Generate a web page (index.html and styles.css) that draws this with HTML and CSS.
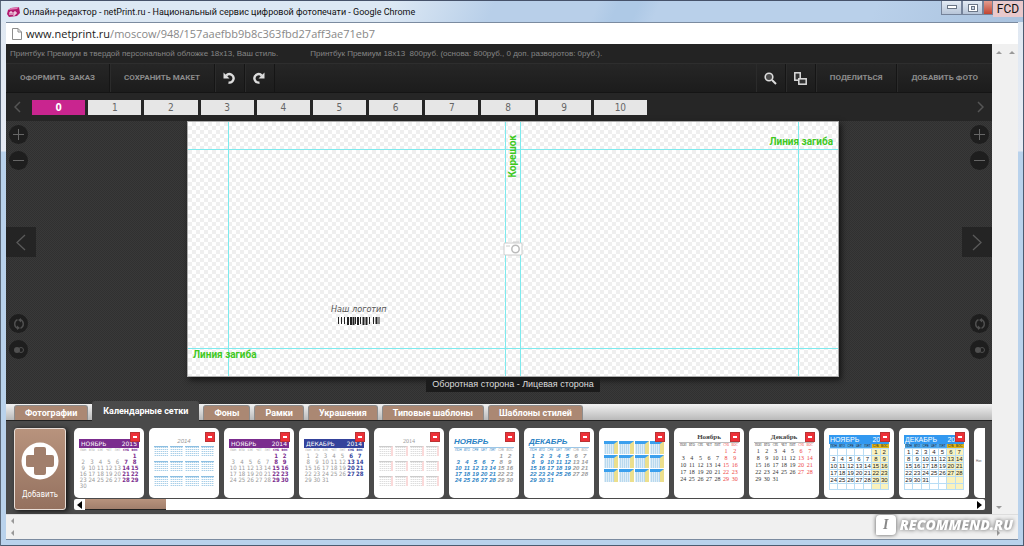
FILE: index.html
```
<!DOCTYPE html>
<html lang="ru">
<head>
<meta charset="utf-8">
<title>Онлайн-редактор - netPrint.ru</title>
<link rel="stylesheet" href="styles.css">
</head>
<body>
<div class="window">
  <header class="titlebar">
    <svg class="logo" viewBox="0 0 13 10" width="13" height="10" aria-hidden="true"><path d="M1 3 L4 1 L12 0 L13 6 L10 9 L2 10 L0 7Z" fill="#b3196f"/><path d="M1 3 L4 1 L12 0 L10 2Z" fill="#e07db5"/><path d="M3 8V5h2v3M7 9V5h2v2H7" stroke="#fff" fill="none"/></svg>
    <span class="title">Онлайн-редактор - netPrint.ru - Национальный сервис цифровой фотопечати - Google Chrome</span>
    <div class="winbtns">
      <button class="winbtn" aria-label="Свернуть"><svg width="10" height="5"><rect x=".5" y=".5" width="9" height="3" fill="#fff" stroke="#6b7686"/></svg></button>
      <button class="winbtn" aria-label="Развернуть"><svg width="10" height="8"><rect x=".5" y=".5" width="9" height="7" fill="#fff" stroke="#6b7686"/><rect x="3.5" y="2.5" width="3" height="3" fill="#ccd6e4" stroke="#6b7686"/></svg></button>
      <button class="winbtn close" aria-label="Закрыть"></button>
      <span class="fcd">FCD</span>
    </div>
  </header>
  <div class="frame">
    <div class="address">
      <svg width="10" height="12" viewBox="0 0 10 12" aria-hidden="true"><path d="M.5 .5H6L9.5 4V11.5H.5ZM6 .5V4H9.5" fill="#fff" stroke="#8d8d8d"/></svg>
      <span class="url"><b>www.netprint.ru</b>/moscow/948/157aaefbb9b8c363fbd27aff3ae71eb7</span>
    </div>
    <div class="viewport">
      <main class="app">
        <div class="info"><span>Принтбук Премиум в твердой персональной обложке 18х13, Ваш стиль.</span><span>Принтбук Премиум 18х13&nbsp; 800руб. (основа: 800руб., 0 доп. разворотов: 0руб.).</span></div>
        <nav class="toolbar">
          <button class="tool">ОФОРМИТЬ&nbsp; ЗАКАЗ</button>
          <button class="tool">СОХРАНИТЬ МАКЕТ</button>
          <button class="tool icon" aria-label="Отменить"><svg width="12" height="12" viewBox="0 0 12 12"><path d="M5.500 10.500A4.200 4.200 0 1 0 3.200 3.600" fill="none" stroke="#ddd" stroke-width="2.400"/><path d="M.5 .5V6.500H6.500Z" fill="#ddd"/></svg></button>
          <button class="tool icon" aria-label="Вернуть"><svg width="12" height="12" viewBox="0 0 12 12"><path d="M6.500 10.500A4.200 4.200 0 1 1 8.800 3.600" fill="none" stroke="#ddd" stroke-width="2.400"/><path d="M11.500 .5V6.500H5.500Z" fill="#ddd"/></svg></button>
          <span class="spacer"></span>
          <button class="tool icon" aria-label="Просмотр"><svg width="13" height="13" viewBox="0 0 13 13"><circle cx="5" cy="5" r="3.8" fill="#4a4a4a" stroke="#ddd" stroke-width="1.6"/><path d="M8 8L12 12" stroke="#ddd" stroke-width="2"/></svg></button>
          <button class="tool icon" aria-label="Страницы"><svg width="13" height="13" viewBox="0 0 13 13"><rect x=".8" y=".8" width="5.4" height="7.4" fill="#333" stroke="#ddd" stroke-width="1.5"/><rect x="4.8" y="6.8" width="7.4" height="5.4" fill="#333" stroke="#ddd" stroke-width="1.5"/></svg></button>
          <button class="tool">ПОДЕЛИТЬСЯ</button>
          <button class="tool last">ДОБАВИТЬ ФОТО</button>
        </nav>
        <nav class="pager">
          <button class="pagenav" aria-label="Назад"><svg width="7" height="12"><path d="M6 1L1 6L6 11" fill="none" stroke="#555" stroke-width="1.5"/></svg></button>
          <div class="pages">
            <button class="page current">0</button><button class="page">1</button><button class="page">2</button><button class="page">3</button><button class="page">4</button><button class="page">5</button><button class="page">6</button><button class="page">7</button><button class="page">8</button><button class="page">9</button><button class="page">10</button>
          </div>
          <button class="pagenav" aria-label="Вперёд"><svg width="7" height="12"><path d="M1 1L6 6L1 11" fill="none" stroke="#555" stroke-width="1.5"/></svg></button>
        </nav>
        <section class="stage">
          <div class="side">
            <div class="rounds">
              <button class="round" aria-label="Увеличить"><svg width="11" height="11"><path d="M0 5.5H11M5.5 0V11" stroke="#666"/></svg></button>
              <button class="round" aria-label="Уменьшить"><svg width="11" height="11"><path d="M0 5.5H11" stroke="#666"/></svg></button>
            </div>
            <button class="turn" aria-label="Предыдущий разворот"><svg width="10" height="17"><path d="M9 1L1 8.5L9 16" fill="none" stroke="#5a5a5a" stroke-width="1.3"/></svg></button>
            <div class="rounds">
              <button class="round" aria-label="Повернуть"><svg width="12" height="12"><path d="M4.500 1.700A4.700 4.700 0 0 0 4.500 10.300M7.500 1.700A4.700 4.700 0 0 1 7.500 10.300" fill="none" stroke="#505050" stroke-width="1.400"/><path d="M4 7.500L7 10L4 12ZM8 4.500L5 2L8 0Z" fill="#505050"/></svg></button>
              <button class="round" aria-label="Прозрачность"><svg width="12" height="8"><circle cx="4" cy="4" r="3" fill="#505050"/><circle cx="8" cy="4" r="2.5" fill="none" stroke="#505050"/></svg></button>
            </div>
          </div>
          <div class="middle">
            <div class="artboard">
              <i class="vline v1"></i><i class="vline v2"></i><i class="vline v3"></i><i class="vline v4"></i>
              <i class="hline h1"></i><i class="hline h2"></i>
              <span class="fold topright">Линия загиба</span>
              <span class="fold bottomleft">Линия загиба</span>
              <span class="fold spine">Корешок</span>
              <svg class="camera" width="20" height="15" viewBox="0 0 20 15"><rect x="1" y="2" width="18" height="12" rx="1" fill="#fff" stroke="#ccc"/><path d="M3 5h4M10 1h6" stroke="#ccc"/><circle cx="12.500" cy="8" r="3.700" fill="#fff" stroke="#bbb" stroke-width="1.500"/></svg>
              <div class="mark"><span>Наш логотип</span>
                <svg width="42" height="9" viewBox="0 0 42 9"><path d="M.5 0v7M3.500 0v7M6.500 0v7M17.500 0v7M22.500 0v7M31.500 0v7M35.500 0v7M41 0v7" stroke="#222"/><path d="M10 0v8M13 0v8M15.500 0v8M20 0v8M25.500 0v8M28.500 0v8M38.500 0v7" stroke="#222" stroke-width="2"/></svg>
              </div>
            </div>
            <div class="caption">Оборотная сторона - Лицевая сторона</div>
          </div>
          <div class="side right">
            <div class="rounds">
              <button class="round" aria-label="Увеличить"><svg width="11" height="11"><path d="M0 5.5H11M5.5 0V11" stroke="#666"/></svg></button>
              <button class="round" aria-label="Уменьшить"><svg width="11" height="11"><path d="M0 5.5H11" stroke="#666"/></svg></button>
            </div>
            <button class="turn" aria-label="Следующий разворот"><svg width="10" height="17"><path d="M1 1L9 8.5L1 16" fill="none" stroke="#5a5a5a" stroke-width="1.3"/></svg></button>
            <div class="rounds">
              <button class="round" aria-label="Повернуть"><svg width="12" height="12"><path d="M4.500 1.700A4.700 4.700 0 0 0 4.500 10.300M7.500 1.700A4.700 4.700 0 0 1 7.500 10.300" fill="none" stroke="#505050" stroke-width="1.400"/><path d="M4 7.500L7 10L4 12ZM8 4.500L5 2L8 0Z" fill="#505050"/></svg></button>
              <button class="round" aria-label="Прозрачность"><svg width="12" height="8"><circle cx="4" cy="4" r="3" fill="#505050"/><circle cx="8" cy="4" r="2.5" fill="none" stroke="#505050"/></svg></button>
            </div>
          </div>
        </section>
        <nav class="tabs">
          <button class="tab">Фотографии</button><button class="tab active">Календарные сетки</button><button class="tab">Фоны</button><button class="tab">Рамки</button><button class="tab">Украшения</button><button class="tab">Типовые шаблоны</button><button class="tab">Шаблоны стилей</button>
        </nav>
        <section class="strip">
          <button class="add"><svg width="38" height="38" viewBox="0 0 38 38"><circle cx="19" cy="19" r="18.500" fill="#fff"/><path d="M15 5h8q2 0 2 2v6h6q2 0 2 2v8q0 2-2 2h-6v6q0 2-2 2h-8q-2 0-2-2v-6H7q-2 0-2-2v-8q0-2 2-2h6V7q0-2 2-2Z" fill="#a17f6c"/></svg><span>Добавить</span></button>
          <div class="gallery">
            <div class="cards" id="cards"></div>
            <div class="scroll"><svg width="5" height="8"><path d="M5 0V8L0 4Z"/></svg><span class="thumb"></span><svg width="5" height="8"><path d="M0 0V8L5 4Z"/></svg></div>
          </div>
        </section>
      </main>
      <div class="vbars"><div class="vbar"><i class="up"></i><i class="down"></i></div><div class="vbar"><i class="up"></i></div></div>
    </div>
    <div class="hbars"><div class="hbar"><i class="lt"></i></div><div class="hbar"><i class="lt"></i><i class="rt"></i></div></div>
  </div>
  <div class="watermark"><span class="bubble">I</span><span class="word">RECOMMEND.RU</span></div>
</div>
<script src="app.js"></script>
</body>
</html>
```
FILE: styles.css
```
* { box-sizing: border-box; }
body { margin: 0; font-family: "Liberation Sans", Arial, sans-serif; }
button { border: 0; padding: 0; margin: 0; background: none; color: inherit; font: inherit; display: flex; align-items: center; justify-content: center; }
svg { display: block; flex: none; }

.window { position: relative; height: 100vh; display: flex; flex-direction: column; padding: 0 6px 6px; border-top: 1px solid #46526a; background: linear-gradient(#dfe8f2 0, #e6ebf4 150px, #b9d2ec 151px, #b9d2ec); box-shadow: inset 1px 0 #5d6b7d, inset -1px -1px #4b5b70; overflow: hidden; }
.titlebar { flex: none; height: 21px; display: flex; align-items: center; margin: 0 -5px; padding-left: 6px; background: linear-gradient(115deg, #dce8f4 0 38%, #b8cfe9 48% 58%, #aec9e6 60% 62%, #b9d0ea 64% 85%, #a9c2de); }
.title { margin-left: 3px; font: 9px/16px Roboto, sans-serif; color: #111; white-space: nowrap; }
.winbtns { display: flex; align-self: flex-start; margin-left: auto; }
.winbtn { width: 21px; height: 14px; border: 1px solid #75839a; border-top: 0; background: linear-gradient(#e4ebf4, #b7c5d8); }
.winbtn.close { width: 10px; background: linear-gradient(#e39d8f, #c14430); }
.fcd { width: 30px; height: 16px; background: #e9c9cc; font: 12px/16px Roboto, sans-serif; color: #111; text-align: center; }
.frame { flex: 1; min-height: 0; display: flex; flex-direction: column; border: 1px solid #7b8ba0; border-width: 1px 0; background: #f0f0f0; }
.address { flex: none; height: 21px; display: flex; align-items: center; gap: 4px; padding-left: 6px; background: #fff; }
.url { font: 11px/18px "Open Sans", sans-serif; color: #888; }
.url b { font-weight: 400; color: #222; }
.viewport { flex: 1; min-height: 0; display: flex; }
.app { flex: 1; min-width: 0; display: flex; flex-direction: column; background: #262626; }
.info { flex: none; height: 19px; display: flex; align-items: center; gap: 32px; padding-left: 4px; background: #232323; font-size: 8px; line-height: 12px; color: #858585; white-space: nowrap; }

.toolbar { flex: none; height: 30px; display: flex; border-top: 1px solid #2e2e2e; border-bottom: 1px solid #151515; background: linear-gradient(#262626, #1c1c1c); }
.tool { padding: 0 14px; border-right: 1px solid #151515; box-shadow: inset 1px 0 #2b2b2b; font: 700 8px/12px Roboto, sans-serif; color: #8b8b8b; white-space: nowrap; }
.tool.icon { width: 30px; padding: 0; }
.tool.last { border-right: 0; }
.spacer { flex: 1; }
.pager { flex: none; height: 28px; display: flex; align-items: center; justify-content: space-between; padding: 0 8px; }
.pages { flex: none; width: 63.4%; margin: 0 auto 0 11px; display: grid; grid-template-columns: repeat(11, 1fr); gap: 3px; }
.page { height: 15px; background: #e6e6e6; color: #666; font: 10px/15px "DejaVu Sans Condensed", sans-serif; }
.page.current { background: #c9258f; color: #fff; font-weight: 700; }

.stage { flex: 1; min-height: 0; display: grid; grid-template-columns: 181fr 652fr 153fr; background: repeating-conic-gradient(#303030 0 25%, #393939 0 50%) 0 0 / 2px 2px; }
.side { display: flex; flex-direction: column; align-items: flex-start; justify-content: space-between; padding: 4px 0 45px; }
.side.right { align-items: flex-end; }
.rounds { display: flex; flex-direction: column; gap: 7px; padding: 0 3px; }
.round { width: 19px; height: 19px; border-radius: 50%; background: #1e1e1e; }
.turn { width: 30px; height: 30px; background: #242424; }
.middle { display: flex; flex-direction: column; align-items: center; }
.artboard { position: relative; width: 100%; height: 256px; border: 1px solid #aaa; background: repeating-conic-gradient(#efefef 0 25%, #fff 0 50%) 0 0 / 8px 8px; box-shadow: 2px 3px 6px #111; }
.vline { position: absolute; top: 0; bottom: 0; width: 1px; background: #7deaee; }
.hline { position: absolute; left: 0; right: 0; height: 1px; background: #7deaee; }
.v1 { left: 6.2%; } .v2 { left: 48.8%; } .v3 { left: 51.1%; } .v4 { left: 93.8%; }
.h1 { top: 10.6%; } .h2 { top: 89%; }
.fold { position: absolute; font: 700 10px/14px Roboto, sans-serif; color: #3fc91f; white-space: nowrap; }
.topright { top: 13px; right: 5px; }
.bottomleft { bottom: 14px; left: 5px; }
.spine { top: 13px; left: 50%; writing-mode: vertical-rl; transform: translateX(-50%) rotate(180deg); }
.camera { position: absolute; top: 119px; left: calc(50% - 10px); }
.mark { position: absolute; top: 180px; left: 22%; display: flex; flex-direction: column; align-items: center; gap: 1px; font: italic 9px/14px "DejaVu Sans Condensed", sans-serif; color: #555; }
.caption { padding: 0 6px; background: #1b1b1b; color: #ddd; font-size: 9px; line-height: 15px; z-index: 1; }

.tabs { flex: none; height: 17px; display: flex; align-items: flex-end; gap: 4px; padding-left: 8px; background: linear-gradient(#f2f2f2, #b9b9b9); border-bottom: 1px solid #222; }
.tab { height: 15px; padding: 0 10px; border: 1px solid #8d8d8d; border-bottom: 0; border-radius: 3px 3px 0 0; background: #ab8873; color: #fff; font: 700 9px/13px Roboto, sans-serif; white-space: nowrap; }
.tab.active { height: 20px; margin-bottom: -1px; border-color: #4a4a4a; background: #4a4a4a; }

.strip { flex: none; height: 93px; display: flex; gap: 8px; padding: 7px 7px 4px 8px; background: #4a4a4a; }
.add { flex: none; width: 52px; flex-direction: column; gap: 9px; padding-top: 4px; border: 1px solid #e8ddd6; border-radius: 3px; background: linear-gradient(#b8937d, #94715f); box-shadow: 2px 1px 5px #111; color: #fff; font: 8px/12px "DejaVu Sans Condensed", sans-serif; }
.gallery { flex: 1; min-width: 0; display: flex; flex-direction: column; gap: 1px; }
.cards { flex: none; display: flex; gap: 5px; overflow: hidden; }
.card { position: relative; flex: none; width: 70px; height: 70px; padding: 11px 5px 0; border-radius: 5px; background: #fff; overflow: hidden; }
.remove { position: absolute; top: 4px; right: 4px; width: 10px; height: 10px; border: 1px solid #b33; background: #ee3038; }
.remove::before { content: ""; width: 4px; height: 2px; background: #fff; }
.scroll { flex: none; height: 11px; display: flex; align-items: center; gap: 3px; padding: 0 3px; background: #fff; border-radius: 2px; }
.scroll .thumb { width: 9%; height: 11px; margin-right: auto; background: linear-gradient(#b8937d, #a17f6c); border-bottom: 1px solid #222; }

.head { display: flex; justify-content: space-between; padding: 0 2px; font: 6px/9px "DejaVu Sans", sans-serif; }
.month { width: 100%; border-collapse: collapse; table-layout: fixed; font: 6px/6px "DejaVu Sans Condensed", sans-serif; color: #999; }
.month th, .month td { height: 6px; padding: 0; text-align: center; font-weight: 400; }
.month th { font-size: 3px; line-height: 5px; height: 5px; }
.bar .head { color: #fff; background: #7b2c8e; }
.bar .we { color: #7b2c8e; font-weight: 700; }
.bar.navy .head { background: #34429b; }
.bar.navy .we { color: #34429b; }
.slant { padding-top: 9px; }
.slant .head { padding: 0; font: italic 700 8px/10px "Liberation Sans", sans-serif; color: #2b82c4; border-bottom: 1px solid #9cc6e6; }
.slant .month { font: italic 700 6px/6px "Liberation Sans", sans-serif; color: #2b82c4; }
.slant .month td { font-weight: 700; }
.slant .we { color: #999; }
.serif { padding-top: 5px; }
.serif .head { justify-content: center; font: 700 7px/9px "Liberation Serif", serif; color: #444; border-bottom: 1px solid #bbb; }
.serif .month { font: 6px/7px "Liberation Serif", serif; color: #333; }
.serif .month td { height: 7px; }
.serif .we { color: #e44; }
.grid { padding-top: 7px; }
.grid .head { padding: 0 1px; font: 7px/9px "Liberation Sans", sans-serif; color: #fff; background: #3198f0; }
.grid .month { font: 6px/6px "Liberation Sans", sans-serif; color: #222; }
.grid .month td { border: 1px solid #b8ddf5; height: 6px; line-height: 6px; }
.grid .month th { background: #4ba7ef; font-size: 3px; line-height: 4px; height: 4px; }
.grid .month .we { background: #faf2bd; }
.grid .month th.we { background: #dfb519; }

.year { display: grid; grid-template-columns: repeat(4, 1fr); gap: 5px 2px; padding-top: 1px; }
.yearhead { margin-top: -2px; font: italic 6px/8px "Liberation Sans", sans-serif; text-align: center; color: #999; }
.mini { height: 10px; border-top: 1px solid #8dbfe2; background: repeating-linear-gradient(90deg, #fff9 0 1px, transparent 1px 2px), repeating-linear-gradient(#a9cfe8 0 1px, #fff 1px 2px); }
.pale .yearhead { font-family: "Liberation Serif", serif; font-style: normal; }
.pale .mini { border-top: 1px solid #ccc; background: repeating-linear-gradient(90deg, #fff9 0 1px, transparent 1px 2px), repeating-linear-gradient(#ddd 0 1px, #fff 1px 2px); border-right: 2px solid #fbdada; }
.vivid .year { gap: 1px; padding-top: 2px; }
.vivid .mini { height: 13px; border-top: 3px solid #3aa0ee; border-right: 4px solid #ecdf8c; background: repeating-linear-gradient(90deg, #fff8 0 1px, transparent 1px 2px), #b9d9ee; }
.tiny { padding: 31px 2px; font-size: 3px; line-height: 4px; color: #555; }

.vbars { flex: none; width: 26px; display: flex; background: #f0f0f0; }
.vbar { flex: 1; display: flex; flex-direction: column; align-items: center; justify-content: space-between; padding: 7px 0 5px; }
.up, .down { border: 3px solid transparent; border-top-width: 0; border-bottom-color: #999; }
.down { transform: rotate(180deg); }
.hbars { flex: none; height: 25px; background: #f0f0f0; border-top: 1px solid #ddd; }
.hbar { display: flex; align-items: center; justify-content: space-between; height: 12px; padding: 0 18px 0 5px; }
.lt, .rt { border: 3px solid transparent; border-left-width: 0; border-right-color: #999; }
.rt { transform: rotate(180deg); }
.watermark { position: absolute; right: 11px; bottom: 11px; display: flex; align-items: center; gap: 4px; color: #fff; filter: drop-shadow(0 0 2px #555); }
.bubble { width: 20px; height: 20px; border-radius: 4px 4px 4px 1px; background: #fff; color: #888; font: italic 700 14px/20px "Liberation Serif", serif; text-align: center; }
.word { font: italic 800 14px/20px "Open Sans", sans-serif; }
```
FILE: app.js
```
// Calendar templates shown in the gallery strip.
const templates = [
  { kind: "bar", name: "НОЯБРЬ", year: 2015, offset: 6, days: 30 },
  { kind: "soft", year: 2014 },
  { kind: "bar", name: "НОЯБРЬ", year: 2014, offset: 5, days: 30 },
  { kind: "bar navy", name: "ДЕКАБРЬ", year: 2014, offset: 0, days: 31 },
  { kind: "pale", year: 2014 },
  { kind: "slant", name: "НОЯБРЬ", offset: 5, days: 30 },
  { kind: "slant", name: "ДЕКАБРЬ", offset: 0, days: 31 },
  { kind: "vivid" },
  { kind: "serif", name: "Ноябрь", offset: 5, days: 30 },
  { kind: "serif", name: "Декабрь", offset: 0, days: 31 },
  { kind: "grid", name: "НОЯБРЬ", year: 2014, offset: 5, days: 30 },
  { kind: "grid", name: "ДЕКАБРЬ", year: 2014, offset: 0, days: 31 },
];
const weekdays = ["ПОН", "ВТО", "СРЕ", "ЧЕТ", "ПЯТ", "СУБ", "ВОС"];
const cls = (i) => (i > 4 ? ' class="we"' : "");

function monthTable(t) {
  let rows = "";
  // Ruled calendars always show six weeks; slots outside the month stay empty.
  const weeks = t.kind === "grid" ? 6 : Math.ceil((t.offset + t.days) / 7);
  for (let w = 0; w < weeks; w++) {
    rows += "<tr>";
    for (let i = 0; i < 7; i++) {
      const d = w * 7 + i - t.offset + 1;
      rows += `<td${cls(i)}>${d > 0 && d <= t.days ? d : ""}</td>`;
    }
    rows += "</tr>";
  }
  return `<div class="head"><span>${t.name}</span><span>${t.year || ""}</span></div>` +
    `<table class="month"><thead><tr>${weekdays.map((n, i) => `<th${cls(i)}>${n}</th>`).join("")}</tr></thead><tbody>${rows}</tbody></table>`;
}

function yearGrid(t) {
  return (t.year ? `<div class="yearhead">${t.year}</div>` : "") +
    `<div class="year">${'<div class="mini"></div>'.repeat(12)}</div>`;
}

document.getElementById("cards").innerHTML = templates.map((t) =>
  `<div class="card ${t.kind}">${t.days ? monthTable(t) : yearGrid(t)}<button class="remove" aria-label="Удалить"></button></div>`
).join("") + '<div class="card tiny">Ноя</div>';
```
